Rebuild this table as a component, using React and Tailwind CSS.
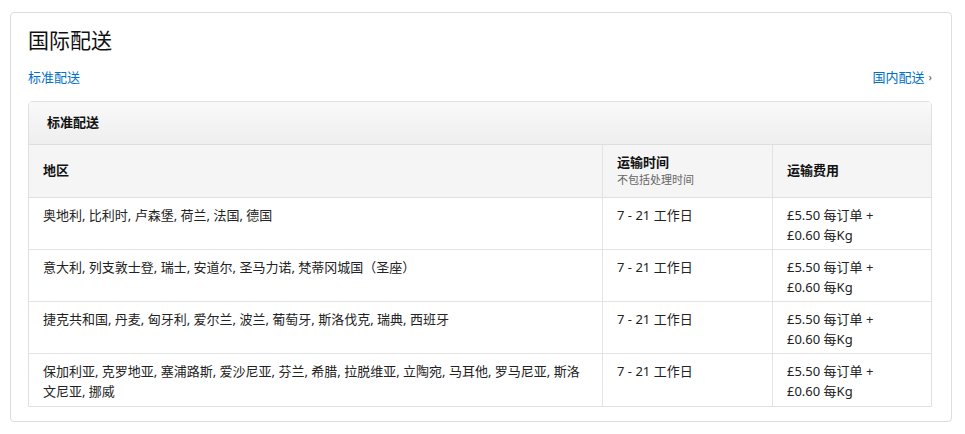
const rows = [
  '奥地利, 比利时, 卢森堡, 荷兰, 法国, 德国',
  '意大利, 列支敦士登, 瑞士, 安道尔, 圣马力诺, 梵蒂冈城国（圣座）',
  '捷克共和国, 丹麦, 匈牙利, 爱尔兰, 波兰, 葡萄牙, 斯洛伐克, 瑞典, 西班牙',
  '保加利亚, 克罗地亚, 塞浦路斯, 爱沙尼亚, 芬兰, 希腊, 拉脱维亚, 立陶宛, 马耳他, 罗马尼亚, 斯洛文尼亚, 挪威',
]

export default function App() {
  return (
    <div
      className="bg-white pl-[10px] pr-[13px] pt-[12px] pb-[13px] text-[#333]"
      style={{ fontFamily: '"Noto Sans", "Noto Sans CJK SC", sans-serif' }}
    >
      <div className="border border-[#dcdcdc] rounded-[4px] pl-[17px] pr-[19px] pt-[11px] pb-[14px]">
        <h1 className="text-[21px] leading-[32px] text-[#111] font-normal">国际配送</h1>
        <div className="flex items-center justify-between mt-[12px] text-[13px] leading-[18px] text-[#0070c9]">
          <a href="#">标准配送</a>
          <a href="#" className="flex items-center gap-[4px]">
            国内配送 <span className="text-[11px] text-[#555]">›</span>
          </a>
        </div>
        <div className="mt-[15px] border border-[#e0e0e0] rounded-t-[4px] text-[13px]">
          <div className="h-[43px] flex items-center pl-[18px] font-bold text-[#111] bg-gradient-to-b from-[#f9f9f9] to-[#eeeeee] border-b border-[#dedede]">
            标准配送
          </div>
          <div className="grid grid-cols-[573px_170px_1fr] bg-[#f5f5f5] h-[53px] border-b border-[#e0e0e0] font-bold text-[#111]">
            <div className="flex items-center pl-[14px]">地区</div>
            <div className="flex flex-col justify-center pl-[14px] border-l border-[#e3e3e3]">
              <span className="leading-[18px]">运输时间</span>
              <span className="text-[11px] font-normal text-[#666] leading-[18px]">不包括处理时间</span>
            </div>
            <div className="flex items-center pl-[14px] border-l border-[#e3e3e3]">运输费用</div>
          </div>
          {rows.map((r, i) => (
            <div
              key={i}
              className={`grid grid-cols-[573px_170px_1fr] h-[52px] leading-[20px] text-[#222] ${i < rows.length - 1 ? 'border-b border-[#e3e3e3]' : ''}`}
            >
              <div className="pl-[14px] pr-[16px] pt-[7px]">{r}</div>
              <div className="pl-[14px] pt-[7px] border-l border-[#e3e3e3]">7 - 21 工作日</div>
              <div className="pl-[14px] pt-[7px] border-l border-[#e3e3e3]">
                £5.50 每订单 +<br />£0.60 每Kg
              </div>
            </div>
          ))}
        </div>
      </div>
    </div>
  )
}
